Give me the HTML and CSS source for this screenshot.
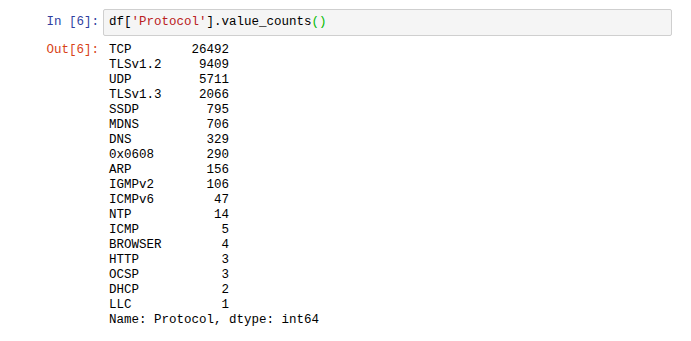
FILE: index.html
```html
<!DOCTYPE html>
<html>
<head>
<meta charset="utf-8">
<link rel="stylesheet" href="styles.css">
</head>
<body>
<div class="cell">
  <div class="row">
    <div class="prompt in">In&nbsp;[6]:</div>
    <div class="input"><span>df[</span><span class="str">'Protocol'</span><span>].value_counts</span><span class="br">()</span></div>
  </div>
  <div class="row out-row">
    <div class="prompt out">Out[6]:</div>
<pre class="output">TCP        26492
TLSv1.2     9409
UDP         5711
TLSv1.3     2066
SSDP         795
MDNS         706
DNS          329
0x0608       290
ARP          156
IGMPv2       106
ICMPv6        47
NTP           14
ICMP           5
BROWSER        4
HTTP           3
OCSP           3
DHCP           2
LLC            1
Name: Protocol, dtype: int64</pre>
  </div>
</div>
</body>
</html>
```
FILE: styles.css
```css
html, body {
  margin: 0;
  padding: 0;
  background: #ffffff;
}
.cell {
  padding: 9px 19px 0 0;
  font-family: "Liberation Mono", "Courier New", monospace;
  font-size: 12.5px;
  line-height: 15px;
  color: #000;
}
.row {
  display: flex;
  align-items: flex-start;
}
.prompt {
  width: 99px;
  flex: 0 0 99px;
  text-align: right;
  padding-right: 4px;
  white-space: nowrap;
}
.prompt.in {
  color: #303f9f;
  padding-top: 6px;
}
.prompt.out {
  color: #d84315;
}
.input {
  flex: 1;
  border: 1px solid #cfcfcf;
  border-radius: 2px;
  background: #f5f5f5;
  padding: 5px 5px;
  white-space: pre;
}
.str { color: #ba2121; }
.br { color: #00bb00; }
.out-row {
  margin-top: 7px;
}
.output {
  margin: 0;
  padding-left: 6px;
  font: inherit;
  line-height: 15px;
}
```
